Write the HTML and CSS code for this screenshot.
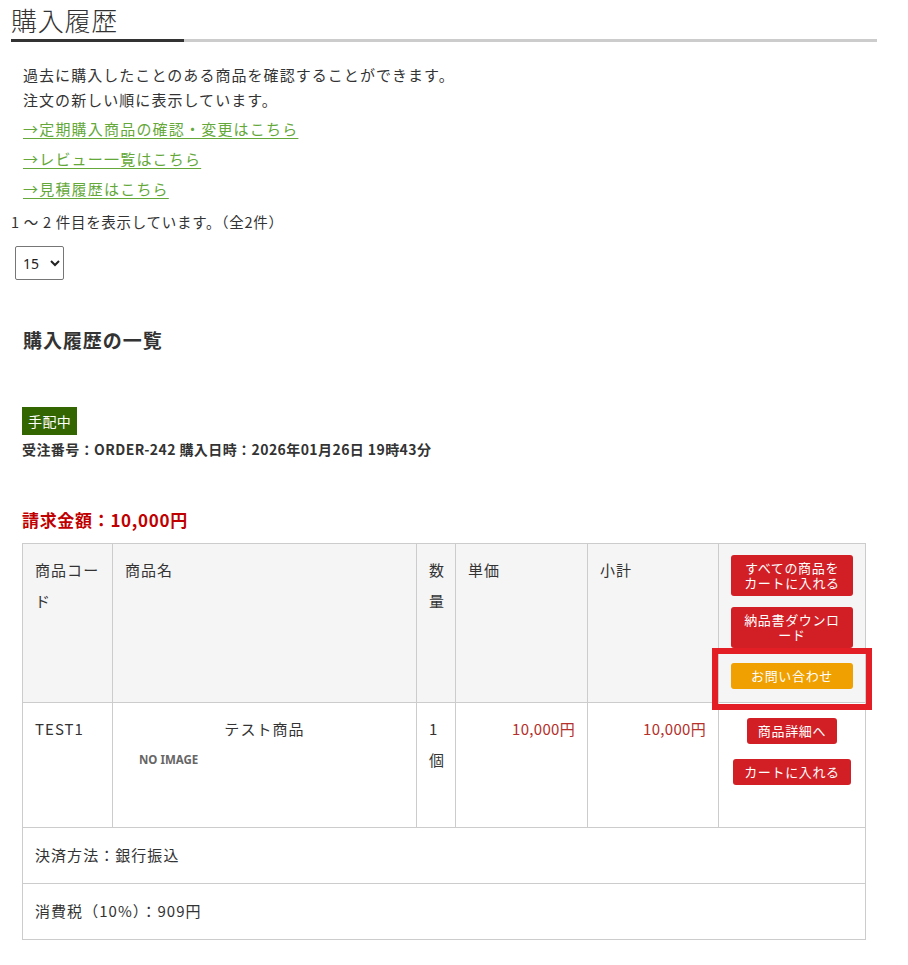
FILE: index.html
```html
<!DOCTYPE html>
<html lang="ja">
<head>
<meta charset="utf-8">
<title>購入履歴</title>
<link rel="stylesheet" href="styles.css">
</head>
<body>
<div class="page">
  <h1 class="page-title">購入履歴</h1>
  <div class="title-bar"><div class="title-bar-accent"></div></div>

  <div class="intro">
    <p>過去に購入したことのある商品を確認することができます。</p>
    <p>注文の新しい順に表示しています。</p>
  </div>
  <ul class="links">
    <li><a href="#">→定期購入商品の確認・変更はこちら</a></li>
    <li><a href="#">→レビュー一覧はこちら</a></li>
    <li><a href="#">→見積履歴はこちら</a></li>
  </ul>
  <p class="count">1 ～ 2 件目を表示しています。（全2件）</p>
  <select class="per-page"><option>15</option><option>30</option><option>50</option></select>

  <h2 class="section-title">購入履歴の一覧</h2>

  <div class="order">
    <span class="badge">手配中</span>
    <p class="order-meta">受注番号：ORDER-242 購入日時：2026年01月26日 19時43分</p>
    <p class="order-total">請求金額：10,000円</p>

    <div class="table-wrap">
      <table class="order-table">
        <colgroup>
          <col class="c-code"><col class="c-name"><col class="c-qty"><col class="c-price"><col class="c-sub"><col class="c-act">
        </colgroup>
        <thead>
          <tr class="head-row">
            <th>商品コード</th>
            <th>商品名</th>
            <th>数量</th>
            <th>単価</th>
            <th>小計</th>
            <th class="act">
              <div class="btns head-btns">
                <a class="btn btn-red btn-wide" href="#">すべての商品を<br>カートに入れる</a>
                <a class="btn btn-red btn-wide" href="#">納品書ダウンロ<br>ード</a>
                <a class="btn btn-orange btn-wide btn-contact" href="#">お問い合わせ</a>
              </div>
            </th>
          </tr>
        </thead>
        <tbody>
          <tr class="item-row">
            <td>TEST1</td>
            <td class="name">
              <div class="name-text">テスト商品</div>
              <div class="noimage">NO IMAGE</div>
            </td>
            <td>1<br>個</td>
            <td class="price">10,000円</td>
            <td class="price">10,000円</td>
            <td class="act">
              <div class="btns row-btns">
                <a class="btn btn-red" href="#">商品詳細へ</a>
                <a class="btn btn-red" href="#">カートに入れる</a>
              </div>
            </td>
          </tr>
          <tr class="info-row"><td colspan="6">決済方法：銀行振込</td></tr>
          <tr class="info-row"><td colspan="6">消費税（10%）：909円</td></tr>
        </tbody>
      </table>
      <div class="highlight"></div>
    </div>
  </div>
</div>
</body>
</html>
```

FILE: styles.css
```css
* { box-sizing: border-box; }
html, body { margin: 0; padding: 0; background: #fff; }
body {
  font-family: "Noto Sans CJK JP", "Noto Sans", sans-serif;
  color: #333;
  font-size: 15px;
  letter-spacing: 0.07em;
}
p { margin: 0; }

.page {
  width: 877px;
  padding-left: 11px;
}

.page-title {
  margin: 0;
  font-size: 26px;
  font-weight: 300;
  line-height: 39px;
  height: 39px;
  letter-spacing: 0.03em;
  color: #333;
}
.title-bar {
  height: 3px;
  background: #cccccc;
  display: flex;
}
.title-bar-accent {
  width: 173px;
  background: #333;
}

.intro {
  margin-top: 20px;
  padding-left: 12px;
  line-height: 25px;
}

.links {
  list-style: none;
  margin: 2px 0 0;
  padding: 0 0 0 12px;
  line-height: 30px;
}
.links a {
  color: #64a83a;
  text-decoration: underline;
  text-underline-offset: 3px;
  letter-spacing: 0.08em;
}

.count {
  margin-top: 5px;
  line-height: 25px;
  font-size: 14.5px;
  letter-spacing: 0.05em;
}

.per-page {
  display: block;
  margin: 12px 0 0 4px;
  width: 49px;
  height: 34px;
  font-family: "Noto Sans", sans-serif;
  font-size: 14px;
  color: #222;
  background: #fff;
  border: 1px solid #767676;
  border-radius: 2px;
  padding-left: 3px;
}

.section-title {
  margin: 46px 0 0 12px;
  font-size: 19px;
  font-weight: 700;
  line-height: 28px;
  letter-spacing: 0.05em;
}

.order {
  padding-left: 11px;
}

.badge {
  display: inline-block;
  margin-top: 53px;
  background: #336600;
  color: #fff;
  font-size: 14px;
  line-height: 28px;
  height: 28px;
  padding: 0 6px;
  letter-spacing: 0.03em;
}

.order-meta {
  font-size: 14px;
  font-weight: 700;
  line-height: 28px;
  letter-spacing: 0.03em;
}

.order-total {
  margin-top: 43px;
  font-size: 17px;
  font-weight: 700;
  color: #c00000;
  line-height: 28px;
  letter-spacing: 0.04em;
}

.table-wrap {
  position: relative;
  margin-top: 9px;
  width: 843px;
}

.order-table {
  width: 843px;
  border-collapse: collapse;
  table-layout: fixed;
}
.c-code { width: 90px; }
.c-name { width: 304px; }
.c-qty { width: 39px; }
.c-price { width: 132px; }
.c-sub { width: 131px; }
.c-act { width: 147px; }

.order-table th,
.order-table td {
  border: 1px solid #cccccc;
  padding: 10px 12px 11px;
  vertical-align: top;
  text-align: left;
  font-weight: 400;
  line-height: 31px;
  font-size: 15px;
}
.order-table th { background: #f5f5f5; }
.head-row { height: 159px; }
.item-row { height: 125px; }
.info-row td { height: 56px; padding-top: 11px; }

.order-table td.name { text-align: center; }
.noimage {
  text-align: left;
  padding-left: 14px;
  font-family: "Noto Sans", sans-serif;
  font-size: 11.5px;
  font-weight: 700;
  color: #666;
  letter-spacing: 0;
}
.order-table td.price {
  text-align: right;
  color: #b5302a;
  letter-spacing: 0.02em;
}

.order-table .act { padding: 0; }
.btns {
  display: flex;
  flex-direction: column;
  align-items: center;
}
.head-btns { padding-top: 11px; }
.head-btns .btn + .btn { margin-top: 11px; }
.head-btns .btn-contact { margin-top: 15px !important; }
.row-btns { padding-top: 15px; gap: 15px; }

.btn {
  display: block;
  border-radius: 3px;
  color: #fff;
  text-decoration: none;
  font-size: 13px;
  line-height: 14px;
  padding: 6px 10px;
  text-align: center;
  letter-spacing: 0.05em;
}
.btn-red { background: #d21f26; }
.btn-orange { background: #f0a000; }
.btn-wide { width: 122px; padding: 6px 4px; }
.head-btns .btn-red { line-height: 15px; padding: 5px 4px 6px; }
.row-btns .btn { padding: 6px 11px; line-height: 14px; }

.highlight {
  position: absolute;
  left: 690px;
  top: 105px;
  width: 160px;
  height: 62px;
  border: 6px solid #e31e24;
  pointer-events: none;
}
```
